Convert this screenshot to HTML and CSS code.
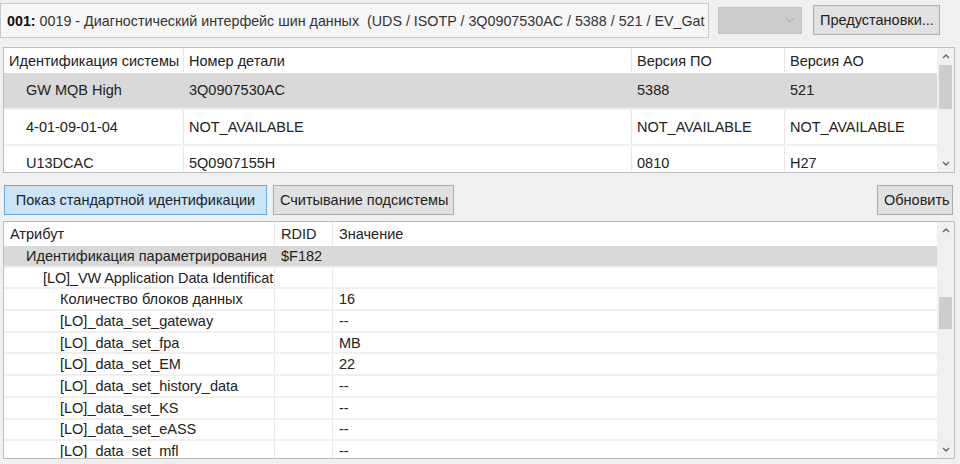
FILE: index.html
```html
<!DOCTYPE html>
<html lang="ru">
<head>
    <meta charset="UTF-8">
    <title>Идентификация</title>
    <link rel="stylesheet" href="styles.css">
</head>
<body>
<div id="wrap">
    <div class="top-bar">
        <div class="title-box"><b>001:</b> 0019 - Диагностический интерфейс шин данных&nbsp; (UDS / ISOTP / 3Q0907530AC / 5388 / 521 / EV_Gat</div>
        <div class="combo">
            <svg width="10" height="6" viewBox="0 0 10 6"><path d="M1 1 L5 5 L9 1" fill="none" stroke="#a8a8a8" stroke-width="1"/></svg>
        </div>
        <button class="btn preset">Предустановки...</button>
    </div>

    <!-- таблица систем -->
    <div class="grid grid-sys">
        <div class="grid-body">
            <div class="row head">
                <div class="cell">Идентификация системы</div>
                <div class="cell">Номер детали</div>
                <div class="cell">Версия ПО</div>
                <div class="cell">Версия АО</div>
            </div>
            <div class="row sel">
                <div class="cell ind">GW MQB High</div>
                <div class="cell">3Q0907530AC</div>
                <div class="cell">5388</div>
                <div class="cell">521</div>
            </div>
            <div class="row">
                <div class="cell ind">4-01-09-01-04</div>
                <div class="cell">NOT_AVAILABLE</div>
                <div class="cell">NOT_AVAILABLE</div>
                <div class="cell">NOT_AVAILABLE</div>
            </div>
            <div class="row">
                <div class="cell ind">U13DCAC</div>
                <div class="cell">5Q0907155H</div>
                <div class="cell">0810</div>
                <div class="cell">H27</div>
            </div>
        </div>
        <div class="scroll">
            <div class="arrow"><svg width="8" height="5" viewBox="0 0 8 5"><path d="M1 4 L4 1 L7 4" fill="none" stroke="#606060" stroke-width="1.3"/></svg></div>
            <div class="track"><div class="thumb"></div></div>
            <div class="arrow"><svg width="8" height="5" viewBox="0 0 8 5"><path d="M1 1 L4 4 L7 1" fill="none" stroke="#606060" stroke-width="1.3"/></svg></div>
        </div>
    </div>

    <div class="btn-row">
        <button class="btn active">Показ стандартной идентификации</button>
        <button class="btn sub">Считывание подсистемы</button>
        <button class="btn refresh">Обновить</button>
    </div>

    <!-- таблица атрибутов -->
    <div class="grid grid-attr">
        <div class="grid-body">
            <div class="row head">
                <div class="cell">Атрибут</div>
                <div class="cell">RDID</div>
                <div class="cell">Значение</div>
            </div>
            <div class="row sel">
                <div class="cell l1">Идентификация параметрирования</div>
                <div class="cell">$F182</div>
                <div class="cell"></div>
            </div>
            <div class="row">
                <div class="cell l2 tight">[LO]_VW Application Data Identificati</div>
                <div class="cell"></div>
                <div class="cell"></div>
            </div>
            <div class="row">
                <div class="cell l3">Количество блоков данных</div>
                <div class="cell"></div>
                <div class="cell">16</div>
            </div>
            <div class="row">
                <div class="cell l3">[LO]_data_set_gateway</div>
                <div class="cell"></div>
                <div class="cell">--</div>
            </div>
            <div class="row">
                <div class="cell l3">[LO]_data_set_fpa</div>
                <div class="cell"></div>
                <div class="cell">MB</div>
            </div>
            <div class="row">
                <div class="cell l3">[LO]_data_set_EM</div>
                <div class="cell"></div>
                <div class="cell">22</div>
            </div>
            <div class="row">
                <div class="cell l3">[LO]_data_set_history_data</div>
                <div class="cell"></div>
                <div class="cell">--</div>
            </div>
            <div class="row">
                <div class="cell l3">[LO]_data_set_KS</div>
                <div class="cell"></div>
                <div class="cell">--</div>
            </div>
            <div class="row">
                <div class="cell l3">[LO]_data_set_eASS</div>
                <div class="cell"></div>
                <div class="cell">--</div>
            </div>
            <div class="row">
                <div class="cell l3">[LO]_data_set_mfl</div>
                <div class="cell"></div>
                <div class="cell">--</div>
            </div>
        </div>
        <div class="scroll">
            <div class="arrow"><svg width="8" height="5" viewBox="0 0 8 5"><path d="M1 4 L4 1 L7 4" fill="none" stroke="#606060" stroke-width="1.3"/></svg></div>
            <div class="track"><div class="thumb"></div></div>
            <div class="arrow"><svg width="8" height="5" viewBox="0 0 8 5"><path d="M1 1 L4 4 L7 1" fill="none" stroke="#606060" stroke-width="1.3"/></svg></div>
        </div>
    </div>
</div>
</body>
</html>
```

FILE: styles.css
```css
* {
    margin: 0;
    padding: 0;
    box-sizing: border-box;
}
body {
    background-color: #f0f0f0;
    font-family: "Liberation Sans", Arial, sans-serif;
    font-size: 14px;
    color: #222;
}
#wrap {
    width: 960px;
    height: 464px;
    overflow: hidden;
}
.top-bar {
    display: flex;
    align-items: center;
    height: 40px;
}
.title-box {
    width: 709px;
    height: 35px;
    margin-top: 1px;
    padding: 1px 0 0 6px;
    line-height: 33px;
    border: 1px solid #c8c8c8;
    background-color: #f6f6f6;
    white-space: nowrap;
    overflow: hidden;
    font-size: 14.3px;
    color: #333;
}
.title-box b {
    color: #111;
}
.combo {
    width: 84px;
    height: 27px;
    margin-left: 9px;
    background-color: #cccccc;
    border: 1px solid #c4c4c4;
    display: flex;
    align-items: center;
    justify-content: flex-end;
    padding-right: 6px;
}
.btn {
    height: 30px;
    padding: 0 6px;
    font-family: "Liberation Sans", Arial, sans-serif;
    font-size: 14.5px;
    color: #222;
    white-space: nowrap;
    background-color: #e1e1e1;
    border: 1px solid #adadad;
}
.preset {
    width: 127px;
    margin-left: 11px;
}
.grid {
    display: flex;
    margin-left: 3px;
    width: 952px;
    background-color: #fff;
    border: 1px solid #bdbdbd;
    overflow: hidden;
}
.grid-sys {
    margin-top: 7px;
    height: 126px;
}
.grid-attr {
    margin-top: 6px;
    height: 238px;
}
.grid-body {
    flex: 1;
    overflow: hidden;
}
.row {
    display: grid;
    border-bottom: 2px solid #f0f0f0;
}
.grid-sys .row {
    grid-template-columns: 180px 448px 153px 152px;
    height: 36.6px;
}
.grid-sys .row.head {
    height: 25px;
    border-bottom: none;
}
.grid-attr .row {
    grid-template-columns: 271px 58px 604px;
    height: 21.7px;
}
.grid-attr .row.head {
    height: 24px;
    border-bottom: none;
}
.cell {
    display: flex;
    align-items: center;
    padding-left: 6px;
    border-right: 1px solid #e8e8e8;
    white-space: nowrap;
    overflow: hidden;
    font-size: 14.5px;
}
.cell:last-child {
    border-right: none;
}
.grid-sys .cell {
    padding-left: 5px;
}
.grid-sys .cell.ind {
    padding-left: 22px;
}
.row.sel {
    background-color: #d9d9d9;
}
.row.sel .cell {
    border-right-color: #d9d9d9;
}
.l1 {
    padding-left: 22px !important;
}
.l2 {
    padding-left: 39px !important;
}
.l3 {
    padding-left: 56px !important;
}
.tight {
    letter-spacing: -0.1px;
}
.scroll {
    width: 17px;
    display: flex;
    flex-direction: column;
    background-color: #f0f0f0;
}
.arrow {
    height: 17px;
    display: flex;
    align-items: center;
    justify-content: center;
}
.track {
    flex: 1;
    padding: 0 2px;
}
.thumb {
    background-color: #cdcdcd;
}
.grid-sys .thumb {
    height: 44px;
}
.grid-attr .thumb {
    height: 32px;
    margin-top: 58px;
}
.btn-row {
    display: flex;
    align-items: center;
    margin-top: 11px;
    padding-left: 4px;
    height: 31px;
}
.btn-row .btn {
    margin-right: 6px;
}
.btn.active {
    width: 263px;
    background-color: #cce4f7;
    border-color: #6aa6d8;
}
.btn.sub {
    width: 181px;
}
.btn.refresh {
    margin-left: auto;
    margin-right: 7px;
    width: 76px;
}
```
